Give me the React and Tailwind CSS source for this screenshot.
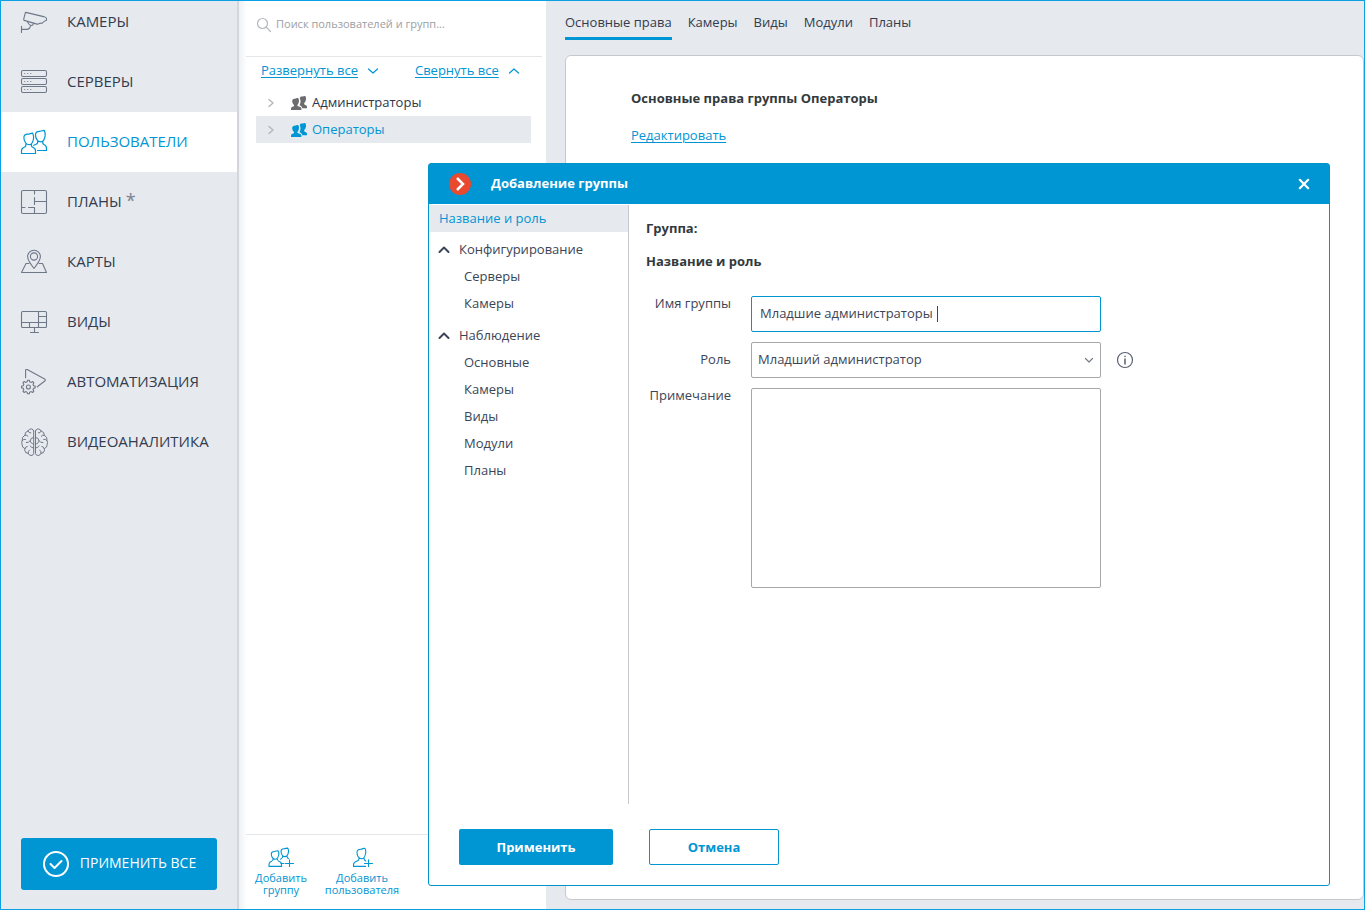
import { useState } from "react";

function Icon({ className = "size-7", box = "0 0 28 28", width = 1.1, children }) {
  return (
    <svg
      aria-hidden="true"
      viewBox={box}
      className={`${className} shrink-0`}
      fill="none"
      stroke="currentColor"
      strokeWidth={width}
      strokeLinecap="round"
      strokeLinejoin="round"
    >
      {children}
    </svg>
  );
}

const CameraIcon = () => (
  <Icon>
    <path d="M5.8 4.4 23.6 8.6Q26.5 9.7 26.5 10.6V12.2Q24 13 22.4 15Q21.4 15.7 20.3 15.1L18.3 15.9Q17.5 16.3 16.2 15.9L4.2 12.4Q3.4 12 3.7 11.2L5.3 4.9Q5.5 4.3 5.8 4.4Z" />
    <path d="M7.5 13.7Q8.2 16.6 11 17.5Q13 17.8 13.6 15.4M10.5 17.6Q10 21.4 6.5 21.4H1.5M1.5 18.3V24.5" />
  </Icon>
);

const ServersIcon = () => (
  <Icon>
    {[2.5, 10.5, 18.5].map((y) => (
      <g key={y}>
        <rect x="1.5" y={y} width="25" height="6" rx="1.4" />
        <path d={`M4.7 ${y + 3}h.1M7.7 ${y + 3}h.1M10.7 ${y + 3}h.1`} />
      </g>
    ))}
  </Icon>
);

const UsersIcon = () => (
  <Icon width={1.2}>
    <path d="M3.900 9.500C3.900 7 5.600 6.300 7.800 6.200C9.800 6.200 11.200 4.900 12.600 5.200C13.500 6.800 13.900 8.800 13.500 11C12.900 14.300 11.200 16.700 8.900 16.700C6 16.700 3.900 13.200 3.900 9.500ZM5.900 15.300C6.300 18 5.300 18.900 4.200 19.300Q1.500 20.300 1.500 22.800V25.500H15.500V22.800Q15.500 20.300 12.800 19.300C11.700 18.900 10.900 18 11.400 15.700" />
    <path d="M15.500 6.700C15.500 4.200 17.200 3.500 19.400 3.400C21.400 3.400 22.800 2.100 24.200 2.400C25.100 4 25.500 6 25.100 8.200C24.500 11.500 22.800 13.900 20.500 13.900C17.600 13.900 15.500 10.400 15.500 6.700ZM17.700 12.900C18.100 15 17.300 15.900 16.200 16.300L13.700 17.300M17.500 22.500H26.500V20.200Q26.500 17.600 23.900 16.500C22.700 16 22.400 15 22.900 12.900" />
  </Icon>
);

const PlansIcon = () => (
  <Icon>
    <rect x="1.500" y="2.500" width="25" height="23" rx="1.500" />
    <path d="M14.500 2.500V6M14.500 9.500V16.500M14.500 13.500H26.500M1.500 19.500H5M8.500 19.500H14.500V25.500" />
  </Icon>
);

const MapIcon = () => (
  <Icon>
    <path d="M14 20.500Q7.600 12.500 7.600 8.600A6.400 6.400 0 0 1 20.400 8.600Q20.400 12.500 14 20.500Z" />
    <circle cx="14" cy="8.500" r="3.600" />
    <path d="M9 15.500H6L1.500 24.500H26.500L22.500 15.500H19" />
  </Icon>
);

const ViewsIcon = () => (
  <Icon>
    <rect x="1.500" y="3.500" width="25" height="16" rx="1.300" />
    <path d="M18.500 3.500V19.500M1.500 14.500H26.500M18.500 8.500H26.500M9.500 14.500V19.500M14.500 19.500V24.500M10.500 24.500H18.500" />
  </Icon>
);

const AutomationIcon = () => (
  <Icon>
    <path d="M5.600 9.700V2.600Q5.600 1 7.200 1.600L24.600 10.900Q26 12 24.800 13L17.300 18.800" />
    <path d="M7.100 13.800 7.500 12.200H9.300L9.700 13.800 11.200 14.400 12.600 13.500 13.900 14.800 13 16.200 13.600 17.700 15.200 18.100V19.900L13.600 20.300 13 21.800 13.900 23.200 12.600 24.500 11.200 23.600 9.700 24.200 9.300 25.800H7.500L7.100 24.200 5.600 23.600 4.200 24.500 2.900 23.200 3.800 21.800 3.200 20.300 1.600 19.900V18.100L3.200 17.700 3.800 16.200 2.900 14.800 4.200 13.500 5.600 14.400Z" />
    <circle cx="8.400" cy="19" r="2" />
  </Icon>
);

const BrainHalf = () => (
  <path d="M13.700 3V25.500Q13.400 27.500 11 27.500Q8.800 27.300 8.200 25.300Q5.200 25.600 4.700 22.200Q4.700 21.300 5 20.700Q1.700 19.500 2 16.200Q1.300 14.500 2.200 12.700Q1.600 8.700 4.900 7.300Q4.700 3.900 8 3Q9 .8 11.400 .9Q13.400 1.200 13.700 3M5 7.300Q7 6.600 8 8.200M8 3Q8.700 5.200 10.800 5M2.200 12.700Q3.500 10.700 5.500 11.300M5 20.700Q5.300 18.500 7.300 18.400M8.200 25.300Q7.800 23 9.500 22M13.700 9.500Q10.500 9.500 10.300 12.500Q9 15 6.300 14.600M10.300 12.500Q10.200 15.700 13.700 16M13.700 20Q11 20 10.200 18" />
);

const BrainIcon = () => (
  <Icon width={1}>
    <BrainHalf />
    <g transform="translate(29.200 0) scale(-1 1)">
      <BrainHalf />
    </g>
  </Icon>
);

const PeopleIcon = () => (
  <svg aria-hidden="true" viewBox="0 0 16 14" className="h-[14px] w-4 shrink-0" fill="currentColor">
    <path d="M8.800 2.500C8.800 .9 10 .6 11.400 .6C12.500 .6 13.300 -.1 14.300 .1C15.300 1.600 15.200 3.600 14.500 5.200C14.200 6 13.700 6.600 13.200 7C13 8.200 13.700 8.700 14.500 9Q16 9.500 16 10.700V12.300H11.200C11.200 10.700 10.200 9.900 8.500 9.300C9.300 8 10.200 4.600 8.800 2.500Z" />
    <path d="M1.200 5C1.200 3.200 2.500 2.700 4 2.700C5.200 2.700 6 1.900 7.100 2.100C8.300 3.500 8.200 5.500 7.500 7.200C7.200 8 6.800 8.600 6.300 9C6.200 9.900 6.900 10.300 8 10.600Q10.400 11.200 10.400 12.600V14H0V12.600Q0 11.200 2 10.600C2.900 10.300 3.200 9.800 3 8.900C1.900 8 1.200 6.600 1.200 5Z" />
  </svg>
);

const Chevron = ({ d, className, width = 1.2, box = "0 0 12 12" }) => (
  <Icon className={className} box={box} width={width}>
    <path d={d} />
  </Icon>
);

const menu = [
  ["КАМЕРЫ", CameraIcon],
  ["СЕРВЕРЫ", ServersIcon],
  ["ПОЛЬЗОВАТЕЛИ", UsersIcon],
  ["ПЛАНЫ", PlansIcon],
  ["КАРТЫ", MapIcon],
  ["ВИДЫ", ViewsIcon],
  ["АВТОМАТИЗАЦИЯ", AutomationIcon],
  ["ВИДЕОАНАЛИТИКА", BrainIcon],
];

function Sidebar() {
  return (
    <aside className="flex w-[238px] shrink-0 flex-col justify-between overflow-hidden border-r-2 border-[#d3d7dc] bg-[#e6e9ee]">
      <nav className="-mt-[9px] flex flex-col">
        {menu.map(([label, Glyph]) => {
          const active = label === "ПОЛЬЗОВАТЕЛИ";
          return (
            <a
              key={label}
              href="#"
              className={`flex h-[60px] items-center gap-[19px] pl-[19px] text-[15px] ${
                active ? "bg-white text-[#0095d3]" : "text-[#323c4e]"
              }`}
            >
              <span className={active ? "text-[#0095d3]" : "text-[#6f7887]"}>
                <Glyph />
              </span>
              <span className="pb-0.5">
                {label}
                {label === "ПЛАНЫ" && <span className="pl-1 text-lg leading-none text-[#7b8290]">*</span>}
              </span>
            </a>
          );
        })}
      </nav>
      <button className="mx-5 mb-[19px] flex h-[52px] items-center justify-center gap-2.5 rounded-[3px] bg-[#0095d3] text-sm text-white">
        <Icon width={2}>
          <circle cx="14" cy="14" r="12" />
          <path d="m8.500 14 4 4 7-7" />
        </Icon>
        <span className="pb-0.5">ПРИМЕНИТЬ ВСЕ</span>
      </button>
    </aside>
  );
}

function GroupRow({ label, active }) {
  return (
    <li>
      <button
        className={`flex h-[27px] w-full items-center text-[13px] ${
          active ? "bg-[#e6e9ee] text-[#0095d3]" : "text-[#2d3648]"
        }`}
      >
        <Chevron className="ml-[9px] mr-3.5 size-3 text-[#b5b8bd]" d="m4 2.500 4 3.500-4 3.500" width={1.500} />
        <span className={active ? "text-[#0095d3]" : "text-[#6c6c6e]"}>
          <PeopleIcon />
        </span>
        <span className="pl-[5px]">{label}</span>
      </button>
    </li>
  );
}

function UsersPanel() {
  return (
    <section className="flex w-[307px] shrink-0 flex-col bg-linear-to-r from-[#eff1f4] to-white to-[8px] pl-[7px]">
      <label className="mr-1 flex h-14 items-center gap-1 border-b border-[#e4e6ea] pb-2 pl-2.5 text-[#b4b7bd]">
        <Icon className="size-4" box="0 0 16 16" width={1.200}>
          <circle cx="6.500" cy="6.500" r="5" />
          <path d="m10.200 10.200 4.300 4.300" />
        </Icon>
        <input
          aria-label="Поиск"
          placeholder="Поиск пользователей и групп..."
          className="min-w-0 flex-1 text-[11px] outline-none placeholder:text-[#9b9ea3]"
        />
      </label>
      <div className="flex h-8 items-center pb-1 pl-[15px] text-[13px] text-[#0095d3]">
        <a href="#" className="underline underline-offset-2">Развернуть все</a>
        <Chevron className="ml-[9px] size-3" d="m1.500 4 4.500 4 4.500-4" />
        <a href="#" className="ml-9 underline underline-offset-2">Свернуть все</a>
        <Chevron className="ml-[9px] size-3" d="m1.500 8 4.500-4 4.500 4" />
      </div>
      <ul className="ml-2.5 mr-[15px] flex flex-1 flex-col">
        <GroupRow label="Администраторы" />
        <GroupRow label="Операторы" active />
      </ul>
      <div className="mr-1 flex h-[75px] border-t border-[#e4e6ea] pl-2 pt-3 text-[11px] leading-3 text-[#0095d3]">
        <button className="flex w-[54px] flex-col items-center gap-[5px]">
          <Icon className="h-5 w-[26px]" box="0 0 26 20" width={1.100}>
            <path d="M3.300 7C3.300 5.200 4.500 4.600 6.300 4.500C7.800 4.500 8.900 3.600 10 3.800C10.800 5 11 6.500 10.700 8C10.200 10.500 9 12.300 7.100 12.300C4.900 12.300 3.300 9.700 3.300 7ZM5 11.400C5.300 13.200 4.600 13.900 3.600 14.300Q1 15.200 1 17.200V19.400H13.500V17.200Q13.500 15.200 10.900 14.300C9.900 13.900 9.200 13.200 9.300 11.400" />
            <path d="M13 4.300C13 2.500 14.200 1.900 16 1.800C17.500 1.800 18.600 .9 19.700 1.100C20.500 2.300 20.700 3.800 20.400 5.300C19.900 7.800 18.700 9.600 16.800 9.600C14.600 9.600 13 7 13 4.300ZM14.700 8.900C14.900 10.700 14.300 11.500 12.500 12.200M18.900 8.700C18.900 10.600 19.500 11.200 20.500 11.600M13 16.500H16M17.500 16.500H25.500M21.500 12.800V20" />
          </Icon>
          <span>Добавить группу</span>
        </button>
        <button className="ml-4 flex w-[76px] flex-col items-center gap-[5px]">
          <Icon className="h-5 w-[22px]" box="0 0 22 20" width={1.100}>
            <path d="M6 5.500C6 3 7.500 2.300 9.700 2.200C11.500 2.200 12.500 1 13.800 1.200C14.800 2.600 15 4.500 14.600 6.500C14 9.600 12.500 11.800 10.500 11.800C7.900 11.800 6 8.800 6 5.500ZM8 10.900C8.300 12.900 7.400 13.700 6.200 14.100Q2.500 15.300 2.500 17.500V19.400H14.500M13 10.700C12.800 12.400 13.300 13.300 14.800 14M13.500 16.500H21.500M17.500 12.800V20" />
          </Icon>
          <span>Добавить пользователя</span>
        </button>
      </div>
    </section>
  );
}

const tabs = ["Основные права", "Камеры", "Виды", "Модули", "Планы"];

function Rights() {
  return (
    <main className="flex min-w-0 flex-1 flex-col bg-[#e6e9ee] pb-[9px] pl-[19px]">
      <nav className="mb-[15px] flex h-[39px] gap-4 text-[13px] text-[#323c4e]">
        {tabs.map((tab, i) => (
          <a key={tab} href="#" className={`pt-[11px] leading-5 ${i === 0 ? "border-b-[3px] border-[#0095d3]" : ""}`}>
            {tab}
          </a>
        ))}
      </nav>
      <div className="flex-1 rounded-md border border-[#c6c8ce] bg-white pl-[65px] pt-8 text-[13px] leading-5">
        <h1 className="font-bold text-[#333a3d]">Основные права группы Операторы</h1>
        <a href="#" className="mt-[17px] inline-block text-[#0095d3] underline underline-offset-2">
          Редактировать
        </a>
      </div>
    </main>
  );
}

const sections = [
  ["Конфигурирование", ["Серверы", "Камеры"]],
  ["Наблюдение", ["Основные", "Камеры", "Виды", "Модули", "Планы"]],
];

function DialogNav() {
  return (
    <nav className="flex w-[200px] shrink-0 flex-col border-r border-[#c6c8ce] text-[13px] text-[#3b4557]">
      <a href="#" className="flex h-[27px] items-center bg-[#e6e9ee] pl-2.5 text-[#0095d3]">
        Название и роль
      </a>
      <div className="flex flex-col gap-[5px] pt-1">
        {sections.map(([title, items]) => (
          <div key={title}>
            <button className="flex h-[27px] items-center pl-[9px]">
              <Chevron className="mr-[9px] size-3" d="m1.500 8 4.500-4.500 4.500 4.500" width={2} />
              {title}
            </button>
            <ul>
              {items.map((item) => (
                <li key={item}>
                  <a href="#" className="flex h-[27px] items-center pl-[35px]">{item}</a>
                </li>
              ))}
            </ul>
          </div>
        ))}
      </div>
    </nav>
  );
}

function GroupDialog() {
  const [name, setName] = useState("Младшие администраторы ");
  return (
    <div
      role="dialog"
      aria-labelledby="dialog-title"
      className="absolute bottom-[23px] left-[427px] right-[34px] top-[162px] flex flex-col rounded-[3px] border border-[#0095c8] bg-white text-[13px]"
    >
      <header className="flex h-10 shrink-0 items-center bg-[#0095d3] pl-5 pr-[17px] text-white">
        <svg aria-hidden="true" viewBox="0 0 22 22" className="size-[22px]">
          <circle cx="11" cy="11" r="11" fill="#e8492f" />
          <path d="m8 5 6 6-6 6" fill="none" stroke="#fff" strokeWidth="2.500" />
        </svg>
        <h2 id="dialog-title" className="flex-1 pl-5 font-bold">Добавление группы</h2>
        <button aria-label="Закрыть" className="p-0.5">
          <Chevron className="size-3" d="m1.800 1.800 8.400 8.400M10.200 1.800 1.800 10.200" width={2.200} />
        </button>
      </header>
      <div className="mt-px flex min-h-0 flex-1">
        <DialogNav />
        <div className="flex-1 pl-[17px] pt-[13px] text-[#3b4557]">
          <h3 className="font-bold leading-5 text-[#333a3d]">Группа:</h3>
          <h3 className="mt-[13px] font-bold leading-5 text-[#333a3d]">Название и роль</h3>
          <form className="mt-[25px] grid grid-cols-[85px_350px_auto] items-start justify-start gap-x-5 gap-y-2.5">
            <label htmlFor="group-name" className="-mt-[3px] text-right leading-5">Имя группы</label>
            <div className="relative">
              <input
                id="group-name"
                value={name}
                onChange={(e) => setName(e.target.value)}
                className="h-9 w-full rounded-[2px] border border-[#0095d3] px-2 pb-0.5 outline-none"
              />
              <span aria-hidden="true" className="absolute left-[186px] top-2.5 h-4 w-px bg-[#3b4557]" />
            </div>
            <span />
            <label htmlFor="role" className="pt-[7px] text-right leading-5">Роль</label>
            <div className="relative">
              <select
                id="role"
                className="h-9 w-full appearance-none rounded-[2px] border border-[#a5a7ab] bg-white px-1.5 outline-none"
              >
                <option>Младший администратор</option>
              </select>
              <Chevron className="pointer-events-none absolute right-1.5 top-3 size-3 text-[#777d87]" d="m2.500 4.500 3.500 3.500 3.500-3.500" />
            </div>
            <button type="button" aria-label="Справка" className="mt-[9px] -ml-[5px] justify-self-start text-[#596171]">
              <Icon className="size-[18px]" box="0 0 18 18" width={1.200}>
                <circle cx="9" cy="9" r="7.500" />
                <path d="M9 8V13M9 5.200V5.400" strokeWidth="1.500" />
              </Icon>
            </button>
            <label htmlFor="note" className="-mt-[3px] text-right leading-5">Примечание</label>
            <textarea id="note" className="h-[200px] w-full resize-none rounded-[2px] border border-[#a5a7ab] p-2 outline-none" />
          </form>
        </div>
      </div>
      <footer className="flex gap-9 pb-5 pl-[30px] pt-[25px] font-bold">
        <button className="h-9 w-[154px] rounded-[2px] bg-[#0095d3] pt-0.5 text-white">Применить</button>
        <button className="h-9 w-[130px] rounded-[2px] border border-[#0095d3] pt-0.5 text-[#0095d3]">Отмена</button>
      </footer>
    </div>
  );
}

export default function App() {
  return (
    <div className="relative flex h-screen overflow-hidden border border-[#0aa0e4] bg-white font-['Open_Sans','Noto_Sans',sans-serif]">
      <Sidebar />
      <UsersPanel />
      <Rights />
      <GroupDialog />
    </div>
  );
}
